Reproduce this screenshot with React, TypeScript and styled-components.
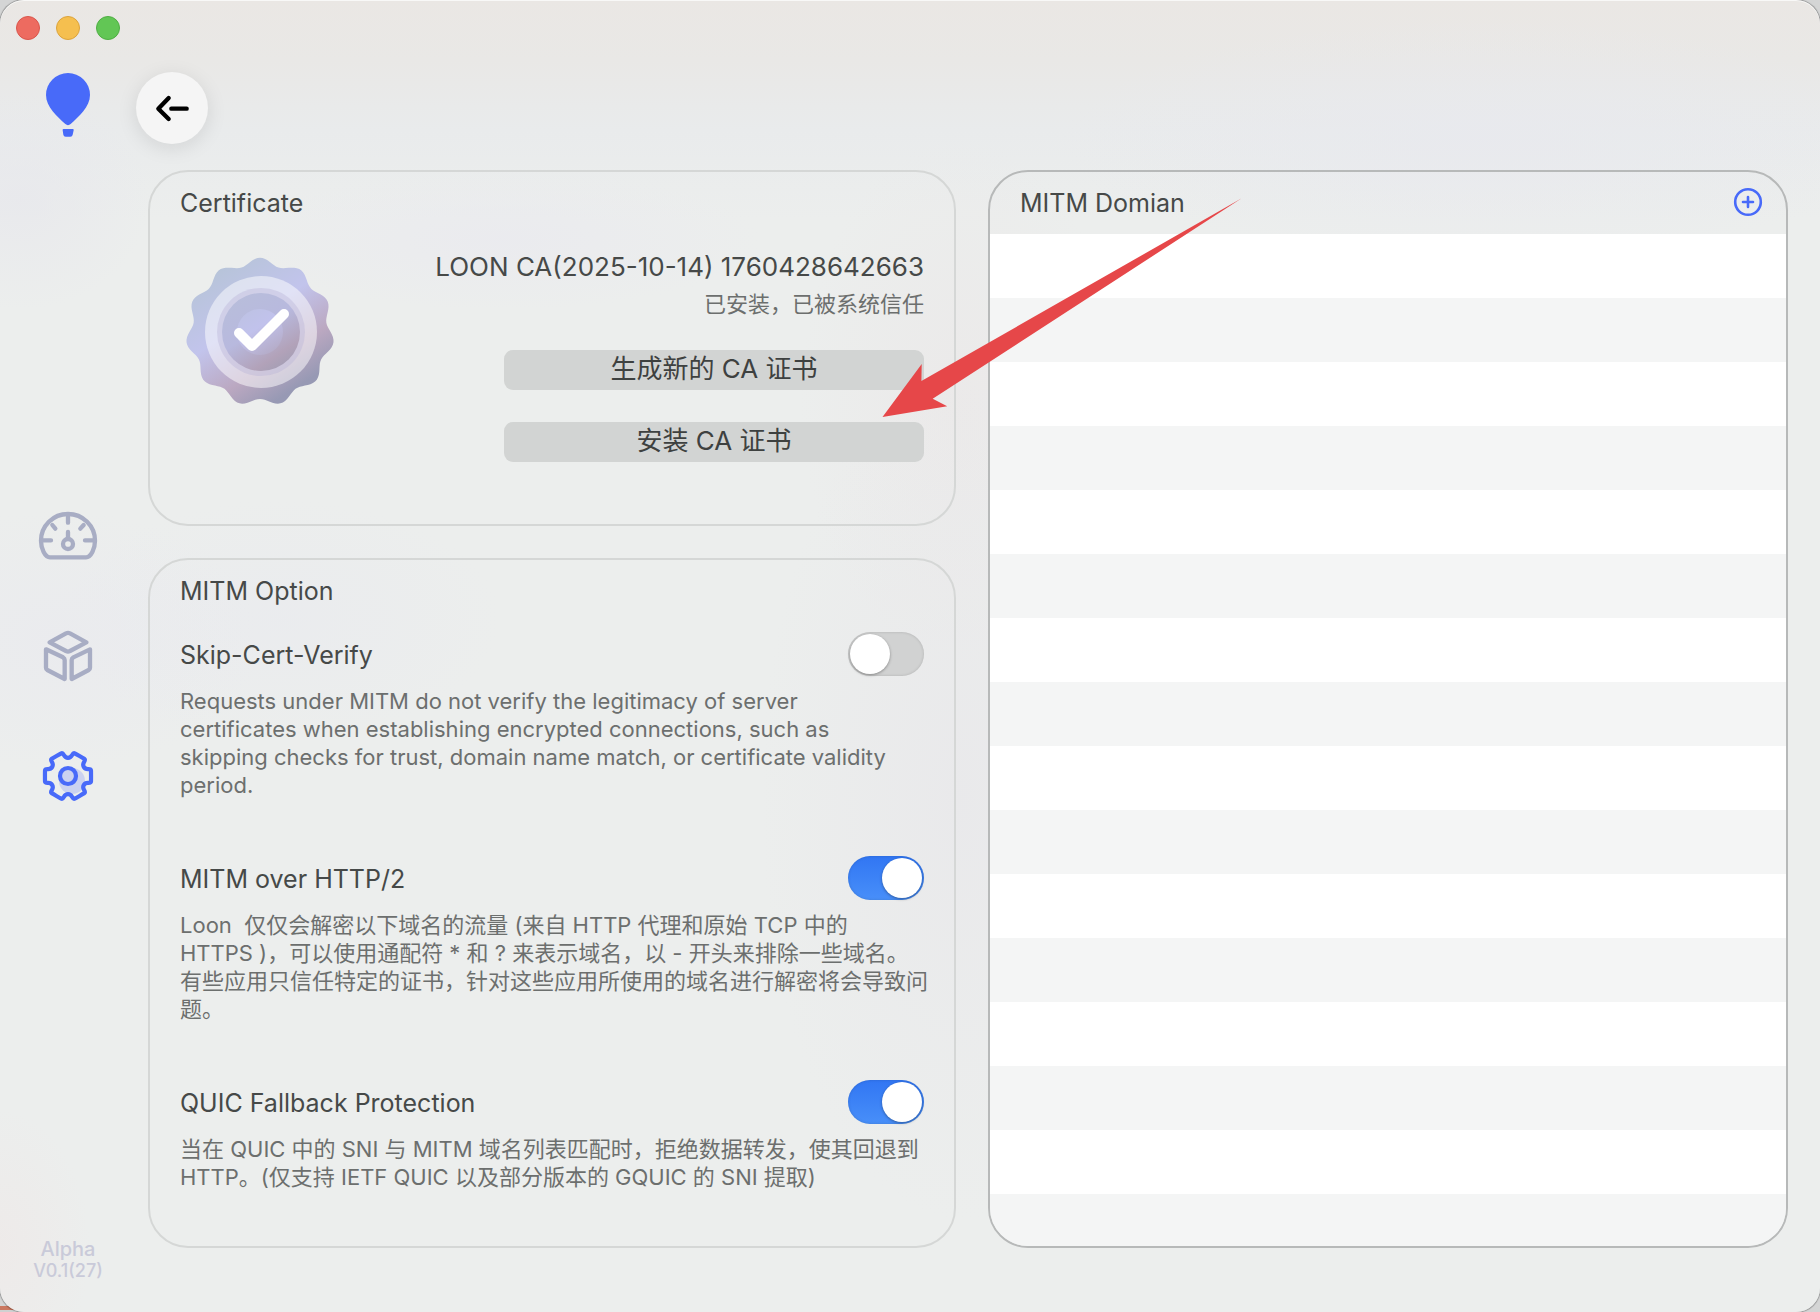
import React, { useState } from "react";
import styled, { createGlobalStyle } from "styled-components";

const GlobalStyle = createGlobalStyle`
  *, *::before, *::after { box-sizing: border-box; }
  html, body { margin: 0; padding: 0; }
  body {
    background: linear-gradient(to top, #cfd1d1 2px, #cb7860 2px, #cb7860 6px, #d4d5d5 6px) no-repeat 0 0 / 50% 100% #d4d5d5;
    font-family: Inter, "Noto Sans CJK SC", sans-serif;
    -webkit-font-smoothing: antialiased;
  }
  button { font: inherit; color: inherit; border: 0; padding: 0; background: none; cursor: pointer; }
  h2, h3, p { margin: 0; font-weight: 400; }
`;

const Window = styled.div`
  position: relative;
  display: grid;
  grid-template-columns: 136px minmax(0, 1fr);
  min-height: 100vh;
  border-radius: 24px;
  overflow: hidden;
  box-shadow: inset 0 1px 0 #f8f8f7, 0 0 1px 1px rgba(0, 0, 0, 0.3);
  background:
    radial-gradient(ellipse 130px 110px at 20px 200px, rgba(231, 231, 236, 0.7), transparent),
    radial-gradient(ellipse 200px 130px at 60px 640px, rgba(233, 233, 239, 0.6), transparent),
    radial-gradient(ellipse 220px 120px at 280px 620px, rgba(233, 234, 239, 0.6), transparent),
    radial-gradient(ellipse 260px 70px at 500px 240px, rgba(234, 234, 239, 0.8), transparent),
    radial-gradient(ellipse 200px 420px at 960px 800px, rgba(232, 231, 234, 0.7), transparent),
    radial-gradient(ellipse 160px 260px at 960px 400px, rgba(235, 233, 233, 0.9), transparent),
    radial-gradient(ellipse 420px 120px at 1480px 140px, rgba(232, 233, 238, 0.8), transparent),
    radial-gradient(ellipse 90px 140px at 0 1250px, rgba(238, 233, 232, 0.8), transparent),
    linear-gradient(#eae7e4 0, #e9e8e6 60px, #e9ebec 130px, #eceeed 220px);
`;

const Sidebar = styled.aside`
  display: grid;
  grid-template-rows: 1fr auto 1fr;
  justify-items: center;
  padding: 16px 0 31px;
`;

const SidebarTop = styled.div`
  display: flex;
  flex-direction: column;
  align-items: center;
  gap: 33px;
`;

const Lights = styled.div`
  display: flex;
  gap: 16px;
`;

const Light = styled.button<{ $fill: string; $edge: string }>`
  width: 24px;
  height: 24px;
  border-radius: 50%;
  background: ${(p) => p.$fill};
  border: 1px solid ${(p) => p.$edge};
`;

const Nav = styled.nav`
  display: flex;
  flex-direction: column;
  gap: 56px;
  margin-top: 14px;
`;

const NavButton = styled.button`
  display: flex;
  align-items: center;
  justify-content: center;
  width: 64px;
  height: 64px;
`;

const Version = styled.footer`
  align-self: end;
  text-align: center;
  color: #c9cad9;
  font-weight: 500;
  font-size: 18px;
  line-height: 21px;
`;

const VersionName = styled.div`
  font-size: 20px;
`;

const Main = styled.main`
  display: flex;
  flex-direction: column;
  gap: 26px;
  padding: 72px 32px 64px 0;
`;

const BackButton = styled.button`
  display: flex;
  align-items: center;
  justify-content: center;
  width: 72px;
  height: 72px;
  border-radius: 50%;
  background: #f5f5f5;
  box-shadow: 0 4px 20px rgba(0, 0, 0, 0.1);
`;

const Columns = styled.div`
  flex: 1;
  display: grid;
  grid-template-columns: minmax(0, 101fr) minmax(0, 100fr);
  gap: 32px;
  margin-left: 12px;
`;

const LeftColumn = styled.div`
  display: flex;
  flex-direction: column;
  gap: 32px;
`;

const Card = styled.section<{ $strong?: boolean; $grow?: boolean }>`
  display: flex;
  flex-direction: column;
  flex: ${(p) => (p.$grow ? "1" : "none")};
  border: 2px solid ${(p) => (p.$strong ? "#b7b9b9" : "#d5d7d6")};
  border-radius: 40px;
  overflow: hidden;
`;

const CardHeader = styled.header`
  display: flex;
  align-items: center;
  justify-content: space-between;
  height: 62px;
  padding: 0 22px 0 30px;
`;

const CardTitle = styled.h2`
  font-size: 25px;
  line-height: 32px;
  color: #464948;
`;

const CertificateBody = styled.div`
  display: flex;
  justify-content: space-between;
  align-items: flex-start;
  padding: 16px 30px 62px;
`;

const Seal = styled.svg`
  margin: 6px 4px 0;
`;

const CertificateInfo = styled.div`
  display: flex;
  flex-direction: column;
  align-items: flex-end;
`;

const CertificateName = styled.h3`
  font-size: 26px;
  line-height: 34px;
  color: #464948;
`;

const CertificateStatus = styled.p`
  font-size: 22px;
  line-height: 28px;
  margin-top: 6px;
  color: #6c6f6e;
`;

const Actions = styled.div`
  display: flex;
  flex-direction: column;
  gap: 32px;
  width: 420px;
  margin-top: 32px;
`;

const ActionButton = styled.button`
  height: 40px;
  padding-bottom: 2px;
  border-radius: 9px;
  background: #d2d4d3;
  color: #3e4140;
  font-size: 26px;
  line-height: 36px;
`;

const Settings = styled.div`
  display: flex;
  flex-direction: column;
  gap: 57px;
  padding: 10px 30px 55px;
`;

const SettingRow = styled.div`
  display: flex;
  align-items: center;
  justify-content: space-between;
  height: 44px;
  margin-bottom: 11px;
`;

const SettingLabel = styled.label`
  font-size: 25px;
  line-height: 32px;
  padding-top: 2px;
  color: #464948;
`;

const SettingText = styled.p`
  font-size: 22px;
  line-height: 28px;
  color: #6c6f6e;
  white-space: pre;
`;

const Switch = styled.input`
  appearance: none;
  margin: 0;
  width: 76px;
  height: 44px;
  padding: 2px;
  border-radius: 22px;
  background: #d1d2d2;
  box-shadow: inset 0 0 3px rgba(0, 0, 0, 0.16);
  cursor: pointer;

  &::before {
    content: "";
    display: block;
    width: 40px;
    height: 40px;
    border-radius: 50%;
    background: #fff;
    box-shadow: 0 1px 3px rgba(0, 0, 0, 0.35);
  }

  &:checked {
    background: linear-gradient(#3176f3, #488ff9);
  }

  &:checked::before {
    margin-left: 32px;
  }
`;

const DomainRows = styled.div`
  flex: 1;
  background: repeating-linear-gradient(#fff 0 64px, #f4f5f5 64px 128px);
`;

const AddButton = styled.button`
  display: flex;
  width: 32px;
  height: 32px;
`;

const Pointer = styled.svg`
  position: absolute;
  left: 882px;
  top: 198px;
  pointer-events: none;
`;

const polar = (degrees: number, radius: number) => {
  const a = (degrees * Math.PI) / 180;
  return [Math.sin(a) * radius, -Math.cos(a) * radius];
};

const sealPath = () => {
  const points: string[] = [];
  for (let d = 0; d < 360; d += 2) {
    const wave = Math.cos((11 * d * Math.PI) / 180);
    const [x, y] = polar(d, 70.6 + 3.6 * wave);
    points.push(`${x.toFixed(2)} ${y.toFixed(2)}`);
  }
  return `M${points.join("L")}Z`;
};

const gearPath = () => {
  const controls: number[][] = [];
  for (let notch = 0; notch < 360; notch += 60) {
    [[-20, 23.4], [-13, 24], [-8, 18.4], [8, 18.4], [13, 24], [20, 23.4]].forEach(([d, r]) =>
      controls.push(polar(notch + d, r)),
    );
  }
  const middle = (a: number[], b: number[]) =>
    `${((a[0] + b[0]) / 2).toFixed(2)} ${((a[1] + b[1]) / 2).toFixed(2)}`;
  const curves = controls.map(
    (c, i) => `Q${c[0].toFixed(2)} ${c[1].toFixed(2)} ${middle(c, controls[(i + 1) % controls.length])}`,
  );
  return `M${middle(controls[controls.length - 1], controls[0])}${curves.join("")}Z`;
};

const Balloon = () => (
  <svg width="44" height="64" viewBox="138 219 132 192" fill="#486af9" role="img" aria-label="Loon">
    <path d="M138 285A66 66 0 0 1 270 285C270 321 236 350 212 372Q204 379 196 372C172 350 138 321 138 285Z" />
    <path d="M191 387H218Q222 387 221 391L218 404Q217 410 211 410H197Q191 410 190 404L188 391Q187 387 191 387Z" />
  </svg>
);

const GaugeIcon = () => (
  <svg width="60" height="50" viewBox="54 63 180 150" fill="none" stroke="#a8adc4" strokeWidth="13" strokeLinecap="round" strokeLinejoin="round">
    <path d="M90 202H198C213 202 225 176 225 152A81 80 0 0 0 63 152C63 176 75 202 90 202Z" />
    <path d="M144 80V98M66 151H93M195 151H222M97 105L106 116M191 105L181 116M144 126V144" />
    <circle cx="144" cy="162" r="15" />
  </svg>
);

const CubeIcon = () => (
  <svg width="50" height="52" viewBox="69 417 150 156" fill="none" stroke="#a8adc4" strokeWidth="13" strokeLinejoin="round">
    <path d="M89 454L138 427Q144 424 150 427L199 454L150 480Q144 483 138 480Z" />
    <path d="M78 475L129 499Q134 502 134 507V564L82 537Q78 535 78 530Z" />
    <path d="M210 475L160 499Q155 502 155 507V564L206 537Q210 535 210 530Z" />
  </svg>
);

const GearIcon = () => (
  <svg width="52" height="52" viewBox="-26 -26 52 52" fill="none" stroke="#486af9" strokeWidth="4.2">
    <circle cx="4" cy="5" r="13" fill="#cbd2f0" stroke="none" />
    <path d={gearPath()} strokeLinejoin="round" />
    <circle r="8" />
  </svg>
);

const CertificateSeal = () => (
  <Seal width="152" height="152" viewBox="-76 -76 152 152" role="img" aria-label="Trusted certificate">
    <defs>
      <linearGradient id="seal" x1="0.22" y1="0.07" x2="0.78" y2="0.93">
        <stop offset="0" stopColor="#b7c4d9" />
        <stop offset="0.4" stopColor="#c2c4ec" />
        <stop offset="0.72" stopColor="#bba8c1" />
        <stop offset="0.95" stopColor="#9799b4" />
      </linearGradient>
      <linearGradient id="disc" x1="0.22" y1="0.07" x2="0.78" y2="0.93">
        <stop offset="0" stopColor="#b8bddb" />
        <stop offset="0.45" stopColor="#b8b9de" />
        <stop offset="0.85" stopColor="#b2a2b9" />
        <stop offset="1" stopColor="#a69fb5" />
      </linearGradient>
      <linearGradient id="core" x1="0.22" y1="0.07" x2="0.78" y2="0.93">
        <stop offset="0" stopColor="#bec2e5" />
        <stop offset="0.4" stopColor="#c1c2ec" />
        <stop offset="1" stopColor="#b5acc8" />
      </linearGradient>
    </defs>
    <path d={sealPath()} fill="url(#seal)" />
    <circle cx="1" r="56" fill="#fff" fillOpacity="0.5" />
    <circle cx="1" r="44" fill="#b8b4d6" fillOpacity="0.4" />
    <circle cx="1" r="39" fill="url(#disc)" />
    <circle r="23" fill="url(#core)" />
    <path d="M-21 1L-8 14L24 -18" fill="none" stroke="#fff" strokeWidth="10" strokeLinecap="round" strokeLinejoin="round" />
  </Seal>
);

type Option = { id: string; label: string; text: string; on: boolean };

const options: Option[] = [
  {
    id: "skip-cert-verify",
    label: "Skip-Cert-Verify",
    text: "Requests under MITM do not verify the legitimacy of server\ncertificates when establishing encrypted connections, such as\nskipping checks for trust, domain name match, or certificate validity\nperiod.",
    on: false,
  },
  {
    id: "mitm-http2",
    label: "MITM over HTTP/2",
    text: "Loon  仅仅会解密以下域名的流量 (来自 HTTP 代理和原始 TCP 中的\nHTTPS )，可以使用通配符 * 和 ? 来表示域名，以 - 开头来排除一些域名。\n有些应用只信任特定的证书，针对这些应用所使用的域名进行解密将会导致问\n题。",
    on: true,
  },
  {
    id: "quic-fallback",
    label: "QUIC Fallback Protection",
    text: "当在 QUIC 中的 SNI 与 MITM 域名列表匹配时，拒绝数据转发，使其回退到\nHTTP。(仅支持 IETF QUIC 以及部分版本的 GQUIC 的 SNI 提取)",
    on: true,
  },
];

const Setting = ({ id, label, text, on }: Option) => {
  const [checked, setChecked] = useState(on);
  return (
    <div>
      <SettingRow>
        <SettingLabel htmlFor={id}>{label}</SettingLabel>
        <Switch
          type="checkbox"
          role="switch"
          id={id}
          aria-describedby={`${id}-text`}
          checked={checked}
          onChange={(e) => setChecked(e.target.checked)}
        />
      </SettingRow>
      <SettingText id={`${id}-text`}>{text}</SettingText>
    </div>
  );
};

export default function App() {
  return (
    <>
      <GlobalStyle />
      <Window>
        <Sidebar>
          <SidebarTop>
            <Lights>
              <Light $fill="#ed6b60" $edge="#d9564c" aria-label="Close" />
              <Light $fill="#f5bf4f" $edge="#dba33c" aria-label="Minimize" />
              <Light $fill="#62c655" $edge="#4fae43" aria-label="Zoom" />
            </Lights>
            <Balloon />
          </SidebarTop>
          <Nav>
            <NavButton aria-label="Dashboard"><GaugeIcon /></NavButton>
            <NavButton aria-label="Modules"><CubeIcon /></NavButton>
            <NavButton aria-label="Settings" aria-current="page"><GearIcon /></NavButton>
          </Nav>
          <Version>
            <VersionName>Alpha</VersionName>
            V0.1(27)
          </Version>
        </Sidebar>
        <Main>
          <BackButton aria-label="Back">
            <svg width="38" height="38" viewBox="459 267 114 114" fill="none" stroke="#000" strokeWidth="13" strokeLinecap="round" strokeLinejoin="round">
              <path d="M506 294L475 326L506 357M514 326H560" />
            </svg>
          </BackButton>
          <Columns>
            <LeftColumn>
              <Card>
                <CardHeader><CardTitle>Certificate</CardTitle></CardHeader>
                <CertificateBody>
                  <CertificateSeal />
                  <CertificateInfo>
                    <CertificateName>LOON CA(2025-10-14) 1760428642663</CertificateName>
                    <CertificateStatus>已安装，已被系统信任</CertificateStatus>
                    <Actions>
                      <ActionButton>生成新的 CA 证书</ActionButton>
                      <ActionButton>安装 CA 证书</ActionButton>
                    </Actions>
                  </CertificateInfo>
                </CertificateBody>
              </Card>
              <Card $grow>
                <CardHeader><CardTitle>MITM Option</CardTitle></CardHeader>
                <Settings>
                  {options.map((option) => (
                    <Setting key={option.id} {...option} />
                  ))}
                </Settings>
              </Card>
            </LeftColumn>
            <Card $strong>
              <CardHeader>
                <CardTitle>MITM Domian</CardTitle>
                <AddButton aria-label="Add domain">
                  <svg width="32" height="32" viewBox="0 0 32 32" fill="none" stroke="#486af9" strokeWidth="2.6" strokeLinecap="round">
                    <circle cx="16" cy="15" r="12.8" />
                    <path d="M16 10V20M11 15H21" />
                  </svg>
                </AddButton>
              </CardHeader>
              <DomainRows />
            </Card>
          </Columns>
        </Main>
        <Pointer width="361" height="220" viewBox="882 198 361 220" fill="#e64749" aria-hidden="true">
          <path d="M882.5 417L921.7 364L921.4 381L1241.7 198.3L932.7 398.7L947.2 406.3Z" />
        </Pointer>
      </Window>
    </>
  );
}
